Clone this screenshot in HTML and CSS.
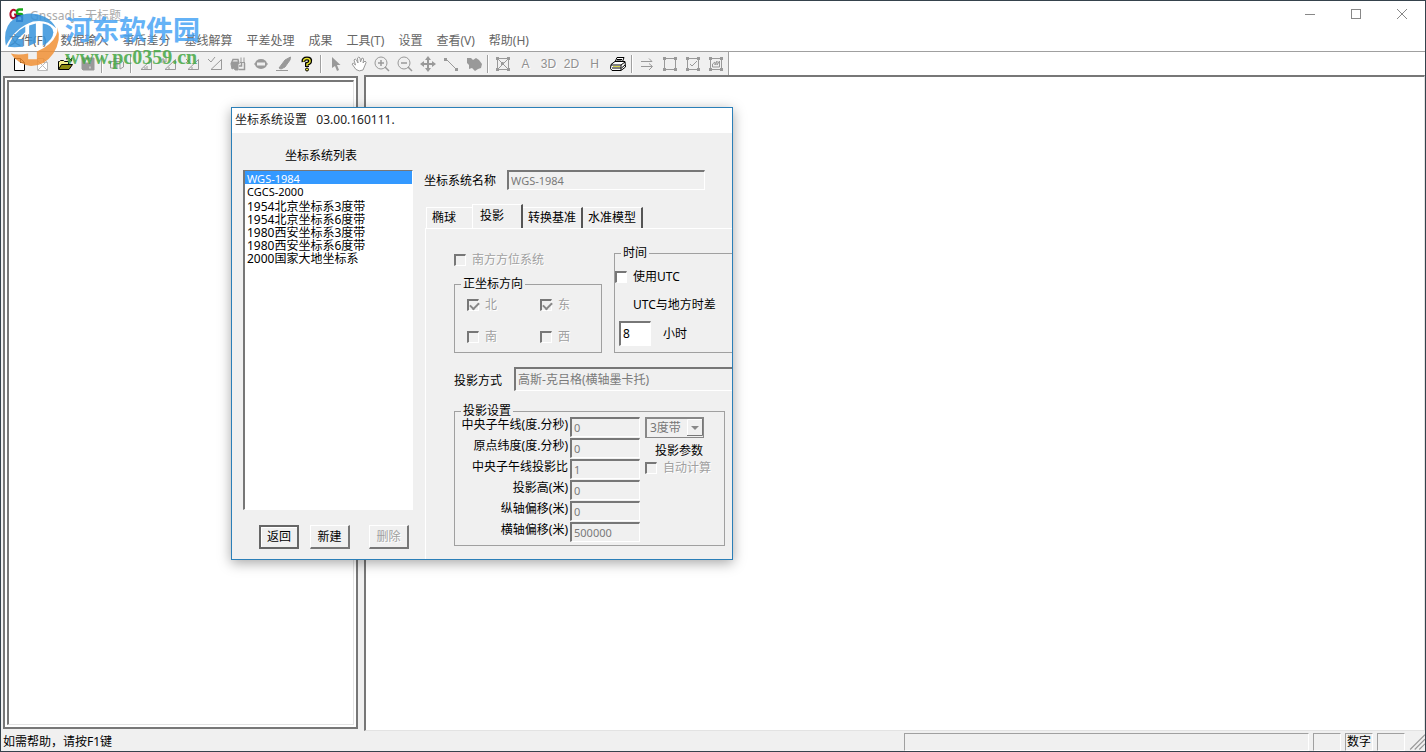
FILE: index.html
```html
<!DOCTYPE html>
<html lang="zh-CN">
<head>
<meta charset="utf-8">
<title>Gnssadj - 无标题</title>
<link rel="stylesheet" href="styles.css">
</head>
<body>
<div class="window">
  <header class="titlebar">
    <svg class="app-icon" viewBox="0 0 16 16"><path d="M7 3Q3 0 1.500 5Q1 10 4 10.500L7 9V6.500H5" fill="none" stroke="#b3122c" stroke-width="2"/><path d="M14 1.500H10.500Q8 1.500 8 4T11 6T13 8.500" fill="none" stroke="#18a818" stroke-width="2.500"/><path d="M8 7V14M8 8H12Q14 9 13 13H7" fill="none" stroke="#1c2f86" stroke-width="2"/></svg>
    <h1 class="title">Gnssadj - 无标题</h1>
    <button class="win-btn" aria-label="最小化"><svg viewBox="0 0 12 12"><path d="M1 6.500H11"/></svg></button>
    <button class="win-btn" aria-label="最大化"><svg viewBox="0 0 12 12"><rect x="1.500" y="1.500" width="9" height="9"/></svg></button>
    <button class="win-btn" aria-label="关闭"><svg viewBox="0 0 12 12"><path d="M1 1L11 11M11 1L1 11"/></svg></button>
  </header>

  <nav class="menu">
    <button>文件(F)</button><button>数据输入</button><button>事后差分</button><button>基线解算</button><button>平差处理</button><button>成果</button><button>工具(T)</button><button>设置</button><button>查看(V)</button><button>帮助(H)</button>
  </nav>

  <div class="toolrow">
    <div class="toolbar">
      <button aria-label="新建"><svg viewBox="0 0 16 16"><path d="M3.500 2.500H9.500L13.500 6.500V14.500H3.500ZM9.500 2.500V6.500H13.500" fill="#fff" stroke="#000"/></svg></button>
      <button aria-label="关闭文件"><svg viewBox="0 0 16 16"><path d="M3.500 2.500H9.500L13.500 6.500V14.500H3.500ZM9.500 2.500V6.500H13.500M4 5L13 14M12 6L4 14" fill="#fff" stroke="#bbb"/></svg></button>
      <button aria-label="打开"><svg viewBox="0 0 16 16"><path d="M1.500 13V5.500H2.500L3.500 4.500H6.500L7.500 5.500H11.500V8" fill="#f4ee8c" stroke="#000"/><path d="M1.500 13.500L4.500 8.500H15.500L12 13.500Z" fill="#8c8a10" stroke="#000"/><path d="M9 3Q12 1 14 4M14.500 2V5H12" fill="none" stroke="#000"/></svg></button>
      <button aria-label="保存"><svg viewBox="0 0 16 16"><path d="M2 2H14V14H3L2 13Z" fill="#999"/><path d="M5 3H11V7H5ZM9 10H11V13H9Z" fill="#eee"/></svg></button>
      <span class="sep"></span>
      <button aria-label="数据"><svg viewBox="0 0 16 16"><path d="M1.500 12V5.500H5V2.500H10L14.500 6V11L11 13V8H4M5 5.500H11M1.500 12H8M5 8V12M8 5V12"/></svg></button>
      <span class="sep"></span>
      <button aria-label="解算"><svg viewBox="0 0 16 16"><path d="M3 13.500L13.500 3.500V13.500ZM7 13V11M9 13V10"/></svg></button>
      <button aria-label="解算全部"><svg viewBox="0 0 16 16"><path d="M4 13.500L14.500 3.500V13.500ZM8 13V11M1 7V3H3V6H5V2"/></svg></button>
      <button aria-label="解算搜索"><svg viewBox="0 0 16 16"><path d="M4 13.500L14.500 3.500V13.500ZM8 13V11M2 3L6 7M6 3L2 7"/></svg></button>
      <button aria-label="检查基线"><svg viewBox="0 0 16 16"><path d="M4 13.500L14.500 3.500V13.500ZM1 3L4 6L8 1"/></svg></button>
      <button aria-label="平差"><svg viewBox="0 0 16 16"><path d="M1 8L3 3.500H8L9 8M8.500 13.500H14.500V7M11.500 7V10H9" stroke-width="1.500"/><path d="M1 8L3 6H8V14H5L4 12L2 13Z" fill="#999"/><path d="M11 1.500V6M14 1.500V6M10 6.500H15"/></svg></button>
      <button aria-label="平差网"><svg viewBox="0 0 16 16"><ellipse cx="8" cy="8" rx="6" ry="5" fill="#999" stroke="none"/><path d="M4 6.500H12V9.500H4Z" fill="#eee" stroke="none"/><path d="M1 8H4M12 8H15"/></svg></button>
      <button aria-label="编辑"><svg viewBox="0 0 16 16"><path d="M14.500 1L9 4L3 12L5 13L9 11L14 4Z" fill="#999"/><path d="M0 14.500H12"/></svg></button>
      <button aria-label="关于"><svg viewBox="0 0 16 16"><path d="M4.500 6Q4 2.500 8 2.500T11 5.500Q11 7 8 8V11" fill="none" stroke="#000" stroke-width="4"/><path d="M4.500 5.500Q4.500 2.500 8 2.500T11 5.500Q11 7 8 8V10" fill="none" stroke="#e9e52f" stroke-width="1.500"/><circle cx="8" cy="13.500" r="1.500" fill="#e9e52f" stroke="#000"/></svg></button>
      <span class="sep"></span>
      <button aria-label="选择"><svg viewBox="0 0 16 16"><path d="M4 1V12L7 10L9 15L11 14L9 9H12.500Z" fill="#999" stroke="none"/></svg></button>
      <button aria-label="平移"><svg viewBox="0 0 16 16"><path d="M5 13.500L1 8Q2 6 4.500 9L3 4Q4 2 5.500 4L7 7L6.500 2Q8 0 9 2L9.500 6L11 2Q13 2 12.500 4L12 7L14 5Q16 6 14.500 8L12 14Q8 16 5 13.500Z" fill="#fff"/></svg></button>
      <button aria-label="放大"><svg viewBox="0 0 16 16"><circle cx="7" cy="7" r="6"/><path d="M4 7H10M7 4V10M11 11L15 15" stroke-width="1.500"/></svg></button>
      <button aria-label="缩小"><svg viewBox="0 0 16 16"><circle cx="7" cy="7" r="6"/><path d="M4 7H10M11 11L15 15" stroke-width="1.500"/></svg></button>
      <button aria-label="移动"><svg viewBox="0 0 16 16"><path d="M8 2V14M2 8H14" stroke-width="2"/><path d="M8 0L11 4H5ZM8 16L11 12H5ZM0 8L4 5V11ZM16 8L12 5V11Z" fill="#999" stroke="none"/></svg></button>
      <button aria-label="测距"><svg viewBox="0 0 16 16"><path d="M3 3L13 13"/><path d="M1 2H4V5H1ZM12 12H15V15H12Z" fill="#999" stroke="none"/></svg></button>
      <button aria-label="区域"><svg viewBox="0 0 16 16"><path d="M1 2H5L7 4L10 2L13 4L16 8L15 12L12 13L9 15L6 12L3 13V9L1 7Z" fill="#999" stroke="none"/></svg></button>
      <span class="sep"></span>
      <button aria-label="全图"><svg viewBox="0 0 16 16"><path d="M2.500 2.500H13.500V13.500H2.500ZM4 4L12 12M12 4L4 12"/><path d="M1 1H4V4H1ZM12 1H15V4H12ZM1 12H4V15H1ZM12 12H15V15H12ZM6 6H9L7 9V10H6Z" fill="#999" stroke="none"/></svg></button>
      <button class="glyph">A</button>
      <button class="glyph">3D</button>
      <button class="glyph">2D</button>
      <button class="glyph">H</button>
      <button aria-label="打印"><svg viewBox="0 0 16 16"><path d="M5 6L7 1.500H14L12 7" fill="#fff" stroke="#000"/><path d="M1 8.500L5 5.500H15L15.500 11L11 14.500H2L0.500 12.500Z" fill="#fff" stroke="#000"/><path d="M1 9H11L15 6M11 9V14M2 12H11M11.500 12L15 9M7 3.500H12M6.500 5H11.500" fill="none" stroke="#000"/><path d="M3 10.500H10" stroke="#d8d54a"/></svg></button>
      <span class="sep"></span>
      <button aria-label="下一步"><svg viewBox="0 0 16 16"><path d="M2 5.500H13M10 2.500L13 5.500M2 10.500H13M10 7.500L13.500 10.500L10 14"/></svg></button>
      <button aria-label="选框"><svg viewBox="0 0 16 16"><path d="M2.500 2.500H13.500V13.500H2.500Z"/><path d="M1 1H4V4H1ZM12 1H15V4H12ZM1 12H4V15H1ZM12 12H15V15H12Z" fill="#999" stroke="none"/></svg></button>
      <button aria-label="选中"><svg viewBox="0 0 16 16"><path d="M2.500 2.500H13.500V13.500H2.500ZM5 8L7 10L12 5"/><path d="M1 1H4V4H1ZM12 1H15V4H12ZM1 12H4V15H1ZM12 12H15V15H12Z" fill="#999" stroke="none"/></svg></button>
      <button aria-label="图形"><svg viewBox="0 0 16 16"><path d="M2.500 2.500H13.500V13.500H2.500ZM4.500 11V8L7 6V9L9 5V9L11.500 5V11Z"/><path d="M1 1H4V4H1ZM12 1H15V4H12ZM1 12H4V15H1ZM12 12H15V15H12Z" fill="#999" stroke="none"/></svg></button>
    </div>
  </div>

  <main class="workspace">
    <section class="tree-pane"><div class="tree"></div></section>
    <section class="canvas-pane"></section>
  </main>

  <footer class="status">
    <span class="help">如需帮助，请按F1键</span>
    <span class="cell message"></span><span class="cell"></span><span class="cell">数字</span><span class="cell"></span>
    <svg class="grip" viewBox="0 0 14 14"><path d="M1 14L14 1M5 14L14 5M9 14L14 9"/></svg>
  </footer>
</div>

<div class="watermark">
  <svg class="mark-logo" viewBox="0 0 60 60">
    <path d="M2 38Q-2 18 12 9Q26 1 42 8Q50 12 54 20Q44 10 30 13Q12 19 2 38Z" fill="#3694dc"/>
    <path d="M4 39Q10 24 22 18V24L14 31H20V39Q10 40 4 39Z" fill="#3694dc"/>
    <path d="M26 17L33 15V35L26 38Z" fill="#3694dc"/>
    <path d="M40 15Q50 16 51 24Q51 32 40 38Z" fill="#3694dc"/>
    <path d="M55 19Q60 32 51 46Q42 59 28 59Q14 57 7 46Q15 48 25 46V52H34V44Q49 38 54 27Q56 23 55 19Z" fill="#f29136"/>
  </svg>
  <div class="mark-text"><strong class="mark-name">河东软件园</strong><span class="mark-url">www.pc0359.cn</span></div>
</div>

<section class="dialog" role="dialog" aria-labelledby="dlg-title">
  <h2 class="dialog-title" id="dlg-title">坐标系统设置&nbsp;&nbsp; 03.00.160111.</h2>
  <div class="dialog-body">
    <div class="systems">
      <label for="systems">坐标系统列表</label>
      <select id="systems" size="8">
        <option class="latin" selected>WGS-1984</option>
        <option class="latin">CGCS-2000</option>
        <option>1954北京坐标系3度带</option>
        <option>1954北京坐标系6度带</option>
        <option>1980西安坐标系3度带</option>
        <option>1980西安坐标系6度带</option>
        <option>2000国家大地坐标系</option>
      </select>
      <div class="actions">
        <button class="btn primary">返回</button>
        <button class="btn">新建</button>
        <button class="btn last" disabled>删除</button>
      </div>
    </div>

    <div class="settings">
      <div class="name-row">
        <label for="name">坐标系统名称</label>
        <input class="field latin" id="name" type="text" value="WGS-1984" disabled>
      </div>
      <div class="tabs" role="tablist">
        <button role="tab" class="tab first">椭球</button>
        <button role="tab" class="tab active" aria-selected="true">投影</button>
        <button role="tab" class="tab">转换基准</button>
        <button role="tab" class="tab">水准模型</button>
      </div>
      <div class="panel" role="tabpanel">
        <div class="top">
          <div class="orientation">
            <label class="check off"><input type="checkbox" disabled>南方方位系统</label>
            <fieldset class="directions">
              <legend>正坐标方向</legend>
              <label class="check off"><input type="checkbox" checked disabled>北</label>
              <label class="check off"><input type="checkbox" checked disabled>东</label>
              <label class="check off"><input type="checkbox" disabled>南</label>
              <label class="check off"><input type="checkbox" disabled>西</label>
            </fieldset>
          </div>
          <fieldset class="time">
            <legend>时间</legend>
            <label class="check"><input type="checkbox">使用UTC</label>
            <label class="offset-label" for="offset">UTC与地方时差</label>
            <div class="offset-row"><input class="field" id="offset" type="text" value="8"><span>小时</span></div>
          </fieldset>
        </div>

        <div class="method">
          <label for="method">投影方式</label>
          <input class="field" id="method" type="text" value="高斯-克吕格(横轴墨卡托)" disabled>
        </div>

        <fieldset class="projection">
          <legend>投影设置</legend>
          <div class="params">
            <label for="p1">中央子午线(度.分秒)</label><input class="field latin" id="p1" type="text" value="0" disabled>
            <label for="p2">原点纬度(度.分秒)</label><input class="field latin" id="p2" type="text" value="0" disabled>
            <label for="p3">中央子午线投影比</label><input class="field latin" id="p3" type="text" value="1" disabled>
            <label for="p4">投影高(米)</label><input class="field latin" id="p4" type="text" value="0" disabled>
            <label for="p5">纵轴偏移(米)</label><input class="field latin" id="p5" type="text" value="0" disabled>
            <label for="p6">横轴偏移(米)</label><input class="field latin" id="p6" type="text" value="500000" disabled>
          </div>
          <div class="zone">
            <div class="combo">
              <select aria-label="分带" disabled><option>3度带</option></select>
              <svg viewBox="0 0 16 17"><path d="M0 0H16V17H0Z" fill="#f0f0f0"/><path d="M0.500 16V0.500H15" fill="none" stroke="#fff"/><path d="M0 16.500H15.500V0" fill="none" stroke="#777"/><path d="M4 7H12L8 11Z" fill="#888"/></svg>
            </div>
            <span class="zone-label">投影参数</span>
            <label class="check off"><input type="checkbox" disabled>自动计算</label>
          </div>
        </fieldset>
      </div>
    </div>
  </div>
</section>
</body>
</html>
```
FILE: styles.css
```css
* { box-sizing: border-box; }

body {
  margin: 0;
  font: 12px/16px "Noto Sans", "Noto Sans CJK SC", sans-serif;
  color: #000;
}

button, input, select {
  margin: 0;
  padding: 0;
  border: 0;
  border-radius: 0;
  background: none;
  font: inherit;
  color: inherit;
}

h1, h2 { margin: 0; font-size: 12px; font-weight: 400; }

fieldset {
  min-width: 0;
  margin: 0;
  padding: 0;
  border: 1px solid #a0a0a0;
}

legend { margin-left: 6px; padding: 0 2px; }

.window {
  display: flex;
  flex-direction: column;
  height: 100vh;
  border: 1px solid #35424c;
  background: #f0f0f0;
}

/* Title bar and menu */
.titlebar {
  display: flex;
  align-items: center;
  flex: none;
  height: 30px;
  padding-left: 8px;
  background: #fff;
}
.app-icon { width: 16px; height: 16px; }
.title { flex: 1; margin-left: 5px; color: #aaa; }
.win-btn { width: 46px; height: 28px; }
.win-btn svg { width: 12px; height: 12px; fill: none; stroke: #888; }

.menu {
  display: flex;
  flex: none;
  height: 21px;
  padding-left: 1px;
  border-bottom: 1px solid #a0a0a0;
  background: #fff;
}
.menu button { padding: 0 7px; color: #666; white-space: nowrap; }

/* Toolbar */
.toolrow { flex: none; height: 23px; background: #fff; }
.toolbar {
  display: flex;
  align-items: center;
  width: fit-content;
  height: 23px;
  padding: 0 1px 0 6px;
  border-right: 1px solid #a0a0a0;
  background: #f0f0f0;
}
.toolbar button {
  display: flex;
  align-items: center;
  justify-content: center;
  width: 23px;
  height: 22px;
}
.toolbar svg { width: 16px; height: 16px; fill: none; stroke: #999; }
.toolbar .glyph { font: 12px/16px "Liberation Sans", sans-serif; color: #909090; text-shadow: 1px 1px #fff; }
.sep { width: 6px; height: 18px; background: linear-gradient(90deg, transparent 2px, #a0a0a0 2px 3px, #fff 3px 4px, transparent 4px); }

/* Work area */
.workspace { display: flex; flex: 1; min-height: 0; gap: 6px; }
.tree-pane {
  flex: none;
  width: 355px;
  margin: 1px 0 2px 2px;
  padding: 2px;
  border: 2px solid #777;
  background: #fff;
}
.tree {
  height: 100%;
  border: 1px solid #e3e3e3;
  border-top: 2px solid #777;
  border-left: 2px solid #777;
}
.canvas-pane {
  flex: 1;
  border-top: 2px solid #777;
  border-left: 2px solid #777;
  border-right: 1px solid #e3e3e3;
  border-bottom: 1px solid #e3e3e3;
  background: #fff;
}

/* Status bar */
.status { display: flex; flex: none; gap: 4px; height: 20px; padding: 2px 0 0 2px; line-height: 18px; }
.help { flex: 1; }
.cell {
  width: 28px;
  padding-left: 1px;
  border: 1px solid #fff;
  border-top-color: #a0a0a0;
  border-left-color: #a0a0a0;
  line-height: 16px;
  white-space: nowrap;
}
.message { width: 405px; }
.grip { width: 16px; height: 17px; fill: none; stroke: #999; }

/* Site mark lying over the title and menu */
.watermark {
  position: absolute;
  top: 8px;
  left: 4px;
  display: flex;
  gap: 3px;
  opacity: .85;
  pointer-events: none;
}
.mark-logo { width: 58px; height: 60px; }
.mark-text { display: flex; flex-direction: column; }
.mark-name { font: 700 27px/42px "Noto Sans CJK SC", sans-serif; color: #4aa5f5; }
.mark-url { font: 700 20px/14px "Liberation Serif", serif; color: #45a845; }

/* Dialog */
.dialog {
  position: absolute;
  top: 107px;
  left: 231px;
  width: 502px;
  border: 1px solid #2b7fb8;
  background: #f0f0f0;
  box-shadow: 0 3px 12px rgba(0, 0, 0, .35);
  overflow: hidden;
}
.dialog-title { padding: 4px 3px 5px; line-height: 16px; background: #fff; color: #222; }
.dialog-body { display: flex; gap: 11px; height: 426px; padding-left: 11px; }

.systems { display: flex; flex-direction: column; flex: none; width: 170px; padding-top: 15px; }
.systems > label { margin-left: 42px; }
.systems select {
  height: 340px;
  margin-top: 6px;
  border: 1px solid #fff;
  border-top-color: #777;
  border-left: 2px solid #777;
  background: #fff;
  outline: 0;
  overflow: hidden;
}
.systems option { height: 13px; min-height: 13px; padding: 0 2px; line-height: 11px; color: #000; }
.systems option:checked { background: #3399ff linear-gradient(#3399ff, #3399ff); color: #fff; -webkit-text-fill-color: #fff; }

.actions { display: flex; gap: 11px; margin: 15px 0 0 16px; }
.btn {
  width: 40px;
  height: 24px;
  border: 1px solid #fff;
  border-right: 2px solid #777;
  border-bottom: 2px solid #777;
  background: #f0f0f0;
}
.primary { border: 2px solid #666; box-shadow: inset 1px 1px #fff; }
.last { margin-left: 8px; }
.btn:disabled, .off { color: #a0a0a0; text-shadow: 1px 1px #fff; }

.field {
  height: 20px;
  padding: 0 0 1px 2px;
  border: 1px solid #fff;
  border-top: 2px solid #777;
  border-left: 2px solid #777;
  background: #fff;
}
.field:disabled { background: #f0f0f0; color: #7a7a7a; }
.systems .latin, .latin { font-size: 11px; }

.settings { flex: 1; min-width: 0; padding-top: 37px; }
.name-row { display: flex; align-items: center; gap: 11px; }
.name-row label { padding-top: 2px; }
.name-row .field { width: 198px; }

.tabs { display: flex; align-items: flex-end; height: 24px; margin-top: 14px; padding-left: 2px; }
.tab {
  height: 21px;
  padding: 0 5px;
  border-top: 1px solid #fff;
  border-right: 2px solid #555;
  white-space: nowrap;
}
.first { width: 46px; padding: 0 15px 0 4px; border-left: 1px solid #fff; border-right: 0; }
.active { width: 51px; height: 24px; padding: 0 17px 2px 7px; border-left: 1px solid #fff; }
.panel { height: 332px; padding: 16px 0 0 28px; border-top: 1px solid #fff; border-left: 1px solid #fff; margin-left: 1px; }

.check { display: flex; align-items: center; gap: 6px; white-space: nowrap; }
.check input {
  appearance: none;
  flex: none;
  width: 12px;
  height: 12px;
  border: 1px solid #fff;
  border-top: 2px solid #777;
  border-left: 2px solid #777;
  background: #fff;
}
.check input:disabled { background: #f0f0f0; }
.check input:checked::before {
  content: "";
  display: block;
  width: 7px;
  height: 4px;
  margin: 1px;
  border-left: 2px solid #888;
  border-bottom: 2px solid #888;
  transform: rotate(-45deg);
}

.top { display: grid; grid-template-columns: 148px 140px; gap: 12px; }
.orientation { padding-top: 7px; }
.directions { display: grid; grid-template-columns: 73px 60px; align-content: start; gap: 16px 0; height: 77px; margin-top: 8px; padding: 5px 0 0 12px; }
.directions legend { margin-left: -6px; }
.time { height: 108px; }
.time .check { margin-top: 8px; }
.offset-label { display: block; margin: 12px 0 0 18px; }
.offset-row { display: flex; align-items: center; gap: 12px; margin: 8px 0 0 4px; }
.offset-row .field { width: 32px; height: 25px; }

.method { display: flex; align-items: center; gap: 12px; margin-top: 14px; }
.method .field { flex: none; width: 240px; height: 24px; padding-bottom: 2px; }
.method label { flex: none; padding-top: 3px; }

.projection { display: grid; grid-template-columns: 185px 1fr; gap: 5px; width: 271px; height: 143px; margin-top: 12px; }
.params { display: grid; grid-template-columns: 113px 70px; align-content: start; gap: 1px 2px; margin-top: -2px; }
.params label { text-align: right; white-space: nowrap; }
.zone { margin-top: -2px; }
.combo { position: relative; width: 59px; height: 21px; }
.combo select { appearance: none; width: 59px; height: 21px; padding-left: 3px; border: 2px solid #888; border-right-width: 1px; border-bottom-width: 1px; background: #f0f0f0; color: #777; opacity: 1; }
.combo svg { position: absolute; top: 2px; right: 1px; width: 16px; height: 17px; pointer-events: none; }
.zone-label { display: block; margin: 5px 0 1px 10px; }
```
